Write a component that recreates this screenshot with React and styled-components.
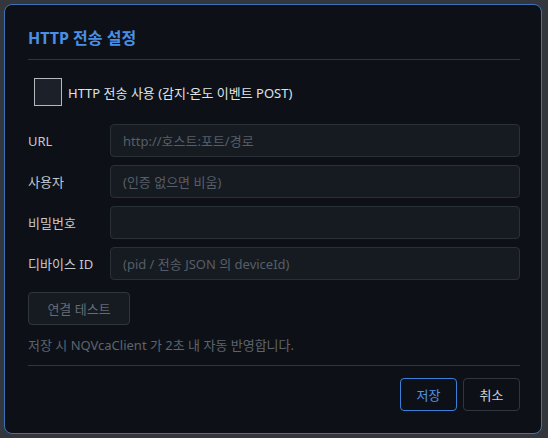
import styled, { createGlobalStyle } from 'styled-components';

const GlobalStyles = createGlobalStyle`
  html, body {
    margin: 0;
    padding: 0;
    background: #33373d;
  }
  body {
    font-family: "Noto Sans", "Noto Sans CJK KR", sans-serif;
  }
  * {
    box-sizing: border-box;
  }
`;

const Dialog = styled.div`
  margin: 4px;
  width: 538px;
  height: 430px;
  background: #0d1117;
  border: 1px solid #3d72b8;
  border-radius: 8px;
  padding: 22px 21px 22px 23px;
  display: flex;
  flex-direction: column;
`;

const Header = styled.div`
  padding-bottom: 10px;
  border-bottom: 1px solid #30363d;
`;

const Title = styled.h1`
  margin: 0;
  font-size: 16px;
  line-height: 22px;
  font-weight: 700;
  color: #4a8fe6;
`;

const CheckRow = styled.label`
  display: flex;
  align-items: center;
  gap: 6px;
  margin: 18px 0 0 6px;
  font-size: 13px;
  color: #dfe3e8;
`;

const Box = styled.span`
  width: 28px;
  height: 28px;
  border: 1px solid #b4b9c0;
  background: #1c2129;
`;

const Form = styled.div`
  margin-top: 18px;
  display: flex;
  flex-direction: column;
  gap: 8px;
`;

const Row = styled.div`
  display: grid;
  grid-template-columns: 82px 1fr;
  align-items: center;
`;

const Label = styled.span`
  font-size: 13px;
  color: #c2c8cf;
`;

const Input = styled.input`
  height: 33px;
  width: 100%;
  background: #161b22;
  border: 1px solid #2a3038;
  border-radius: 4px;
  padding: 0 12px;
  font-family: inherit;
  font-size: 13px;
  color: #c9d1d9;
  outline: none;
  &::placeholder {
    color: #575e67;
  }
`;

const Button = styled.button`
  height: 33px;
  padding: 0 16px;
  background: ${(p) => (p.$muted ? '#161b22' : 'transparent')};
  border: 1px solid ${(p) => (p.$primary ? '#3d7fd6' : '#30363d')};
  border-radius: 4px;
  font-family: inherit;
  font-size: 13px;
  color: ${(p) => (p.$primary ? '#4f94ea' : p.$muted ? '#646b74' : '#c9d1d9')};
`;

const TestButton = styled(Button)`
  align-self: flex-start;
  margin-top: 12px;
  width: 102px;
`;

const Note = styled.p`
  margin: 12px 0 0;
  font-size: 13px;
  line-height: 16px;
  color: #5d646d;
`;

const Footer = styled.div`
  margin-top: 12px;
  padding-top: 12px;
  border-top: 1px solid #30363d;
  display: flex;
  justify-content: flex-end;
  gap: 6px;
`;

const FooterButton = styled(Button)`
  width: 57px;
  padding: 0;
`;

const fields = [
  { label: 'URL', placeholder: 'http://호스트:포트/경로' },
  { label: '사용자', placeholder: '(인증 없으면 비움)' },
  { label: '비밀번호', placeholder: '', type: 'password' },
  { label: '디바이스 ID', placeholder: '(pid / 전송 JSON 의 deviceId)' },
];

const App = () => {
  return (
    <Dialog>
      <GlobalStyles />
      <Header>
        <Title>HTTP 전송 설정</Title>
      </Header>
      <CheckRow>
        <Box />
        HTTP 전송 사용 (감지·온도 이벤트 POST)
      </CheckRow>
      <Form>
        {fields.map((f) => (
          <Row key={f.label}>
            <Label>{f.label}</Label>
            <Input type={f.type || 'text'} placeholder={f.placeholder} />
          </Row>
        ))}
      </Form>
      <TestButton $muted>연결 테스트</TestButton>
      <Note>저장 시 NQVcaClient 가 2초 내 자동 반영합니다.</Note>
      <Footer>
        <FooterButton $primary>저장</FooterButton>
        <FooterButton>취소</FooterButton>
      </Footer>
    </Dialog>
  );
};

export default App;
